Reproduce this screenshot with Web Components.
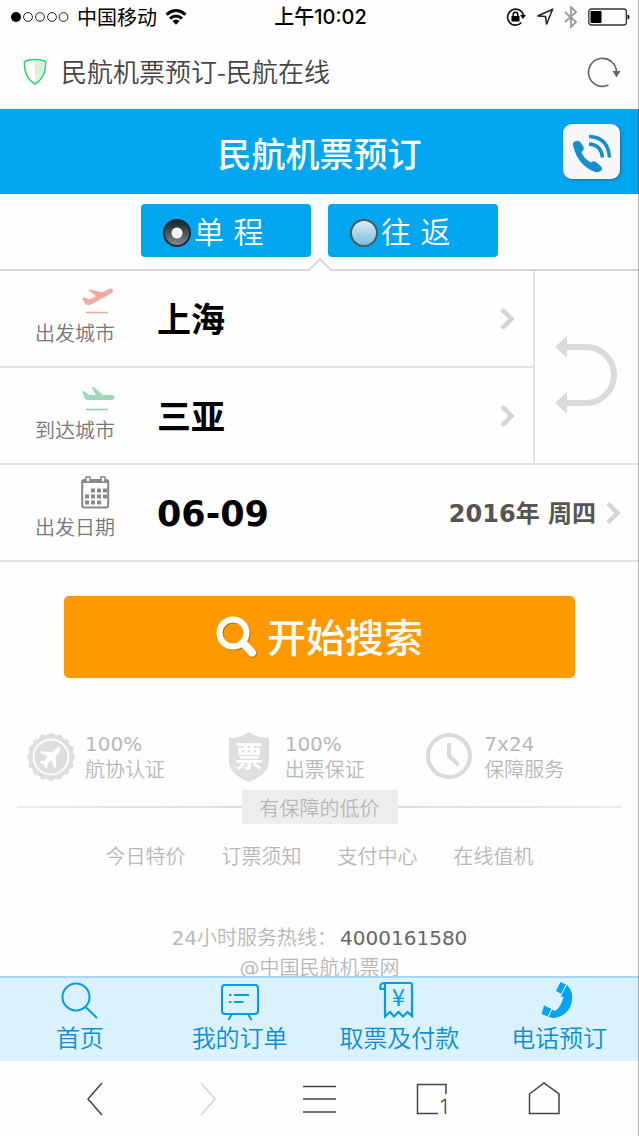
<!DOCTYPE html>
<html lang="zh-CN">
<head>
<meta charset="utf-8">
<meta name="viewport" content="width=device-width, initial-scale=1">
<title>民航机票预订-民航在线</title>
<style>
html, body { margin: 0; height: 100%; }
body { background: #fefefe; font-family: "DejaVu Sans", "Noto Sans CJK SC", sans-serif; font-size: 20px; line-height: 26px; font-weight: 350; color: #000; }
</style>
</head>
<body>
<booking-app></booking-app>

<template id="t-booking-app">
<style>
:host { display: flex; flex-direction: column; height: 100vh; position: relative; }
:host::after { content: ""; position: absolute; top: 0; right: 0; bottom: 0; width: 1px; background: rgba(0,0,0,.3); pointer-events: none; }
main { flex: 1; min-height: 0; overflow-x: hidden; overflow-y: auto; scrollbar-width: none; }
</style>
<status-bar></status-bar>
<browser-bar>民航机票预订-民航在线</browser-bar>
<page-header>民航机票预订</page-header>
<main>
<trip-tabs></trip-tabs>
<search-form></search-form>
<trust-list></trust-list>
<page-footer></page-footer>
</main>
<bottom-nav></bottom-nav>
<browser-tools></browser-tools>
</template>

<template id="t-status-bar">
<style>
:host { display: grid; grid-template-columns: 1fr auto 1fr; align-items: center; height: 36px; padding: 0 9px 2px 11px; box-sizing: border-box; font: 400 20px/34px "Noto Sans CJK SC", sans-serif; }
.side { display: flex; align-items: center; gap: 8px; }
.end { justify-content: flex-end; gap: 10px; }
time { font-family: Inter, "Noto Sans CJK SC", sans-serif; font-weight: 500; }
svg { display: block; }
</style>
<div class="side">
<svg width="58" height="12" viewBox="0 0 58 12"><circle cx="5" cy="6" r="5"/><g fill="none" stroke="#222"><circle cx="17" cy="6" r="4.4"/><circle cx="29" cy="6" r="4.4"/><circle cx="41" cy="6" r="4.4"/><circle cx="52.500" cy="6" r="4.400"/></g></svg>
<span>中国移动</span>
<svg width="22" height="18" viewBox="0 0 22 18"><g fill="none" stroke="#000" stroke-width="3"><path d="M1.500 6.500Q11-1.500 20.500 6.500"/><path d="M5 10.500Q11 5.500 17 10.500"/></g><path d="M7.300 13Q11 10 14.700 13L11 16.800Z"/></svg>
</div>
<time>上午10:02</time>
<div class="side end">
<svg width="20" height="20" viewBox="0 0 20 20"><path d="M15.500 15.500A8 8 0 1 1 17.300 8" fill="none" stroke="#111" stroke-width="1.600"/><path d="M14 8h6l-3 4z"/><path d="M5.500 9h8v5.500h-8z"/><path d="M7.200 9V7.500a2.300 2.300 0 0 1 4.600 0V9" fill="none" stroke="#000" stroke-width="1.500"/></svg>
<svg width="18" height="18" viewBox="0 0 18 18"><path d="M1.500 8L16.500 1.500L10.500 16.500L9.500 8.500Z" fill="none" stroke="#222" stroke-width="1.500"/></svg>
<svg width="14" height="22" viewBox="0 0 14 22"><path d="M1 6L12 16L7 21V1L12 6L1 16" fill="none" stroke="#999" stroke-width="1.800"/></svg>
<svg width="42" height="18" viewBox="0 0 42 18"><rect x=".8" y="1" width="37.500" height="16" rx="2.500" fill="none" stroke="#333" stroke-width="1.300"/><rect x="2.500" y="3" width="11" height="12"/><path d="M39.500 6.500q2 .3 2 2.500t-2 2.500z"/></svg>
</div>
</template>

<template id="t-browser-bar">
<style>
:host { display: flex; align-items: center; height: 73px; padding: 0 18px 2px 23px; box-sizing: border-box; font: 350 26px/36px "Noto Sans CJK SC", sans-serif; color: #444; }
span { flex: 1; margin-left: 14px; padding-bottom: 2px; }
button { border: 0; background: none; padding: 0; }
svg { display: block; }
</style>
<svg width="24" height="28" viewBox="0 0 24 28"><path d="M12 3V25Q21 19 21.500 4.500Q17 3 12 3Z" fill="#d6f3df"/><path d="M12 1.500Q18 1.500 22.500 3.500Q23.500 19 12 26Q.5 19 1.500 3.500Q6 1.500 12 1.500Z" fill="none" stroke="#2fd06d" stroke-width="1.500"/></svg>
<span><slot></slot></span>
<button aria-label="刷新"><svg width="34" height="32" viewBox="0 0 34 32"><path d="M21.500 29A14 14 0 1 1 29.500 16" fill="none" stroke="#666" stroke-width="1.600"/><path d="M25.500 15h8l-4 6.500z" fill="#666"/></svg></button>
</template>

<template id="t-page-header">
<style>
:host { display: grid; grid-template-columns: 1fr auto 1fr; align-items: center; height: 85px; padding: 0 19px; box-sizing: border-box; background: #02a6f0; color: #fff; }
h1 { grid-column: 2; margin: 0; font: 500 34px/48px "Noto Sans CJK SC", sans-serif; padding-top: 2px; }
a { justify-self: end; display: block; width: 57px; height: 55px; border-radius: 9px; background: #f8f8f8; box-shadow: 1px 1px 3px #246a91; }
svg { display: block; }
</style>
<h1><slot></slot></h1>
<a href="tel:4000161580" aria-label="电话"><svg width="57" height="55" viewBox="0 0 57 55"><path d="M10.500 23Q8.500 18 13 17Q16 16 18 19L20.500 23Q21.500 26 18.500 28Q20.500 34.500 28 38.500Q31 36 33.500 38.500L38 42.500Q40.500 45 37.500 47Q35 49 31 47.500Q15 41 10.500 23Z" fill="#168dcc"/><g fill="none" stroke="#168dcc" stroke-width="3.500"><path d="M26 12.500Q45 13 46.500 33.500"/><path d="M26 20Q38 20.500 39.500 33.500"/></g></svg></a>
</template>

<template id="t-trip-tabs">
<style>
:host { display: flex; justify-content: center; gap: 17px; position: relative; padding: 10px 0 13px; border-bottom: 2px solid #d6d6d6; height: 52px; }
label { display: flex; align-items: center; gap: 3px; width: 170px; padding-left: 22px; height: 53px; box-sizing: border-box; border-radius: 4px; background: #02a6f0; color: #fff; font-size: 30px; line-height: 42px; white-space: nowrap; }
span { padding-top: 4px; }
input { appearance: none; margin: 5px 0 0; width: 28px; height: 28px; border-radius: 50%; flex: none; border: 2px solid #4b5961; background: linear-gradient(#dcecf3, #78bfdd); }
input:checked { border-color: #1d2a31; background: radial-gradient(circle, #f4f4f4 0 5px, rgba(0,0,0,0) 6px), linear-gradient(#11242e, #84898b); }
svg { position: absolute; left: calc(50% - 14px); bottom: -2px; }
</style>
<label><input type="radio" name="trip" checked><span>单 程</span></label>
<label><input type="radio" name="trip"><span>往 返</span></label>
<svg width="28" height="15" viewBox="0 0 28 15"><path d="M2 15L14 3L26 15Z" fill="#fefefe"/><path d="M1 14h2L14 3L25 14h2" fill="none" stroke="#d6d6d6" stroke-width="2"/></svg>
</template>

<template id="t-field-row">
<style>
:host { display: block; }
button { display: flex; align-items: center; width: 100%; height: 97px; padding: 0 18px 0 0; border: 0; border-bottom: 2px solid #e2e2e2; background: none; text-align: left; font: inherit; color: inherit; }
.name { display: flex; flex-direction: column; align-items: flex-end; width: 115px; margin-right: 42px; padding-bottom: 10px; line-height: 26px; color: #777; }
.icon { display: block; width: 34px; height: 40px; }
.value { flex: 1; font-weight: 700; font-size: var(--value-size, 34px); line-height: 48px; padding-top: 3px; }
.note { font-weight: 700; font-size: 24px; line-height: 48px; color: #555; margin-right: 10px; padding-top: 3px; white-space: nowrap; }
svg { display: block; }
</style>
<button type="button">
<span class="name"><span class="icon"><slot name="icon"></slot></span><slot name="label"></slot></span>
<span class="value"><slot></slot></span>
<span class="note"><slot name="note"></slot></span>
<svg width="15" height="24" viewBox="0 0 15 24"><path d="M2 2.500L11.500 12L2 21.500" fill="none" stroke="#d4d4d4" stroke-width="4.500"/></svg>
</button>
</template>

<template id="t-search-form">
<style>
:host { display: block; }
.route { display: grid; grid-template-columns: minmax(0, 1fr) 106px; }
.date { --value-size: 35px; }
.swap { border: 0; border-left: 2px solid #e2e2e2; border-bottom: 2px solid #e2e2e2; background: none; padding: 16px 2px 0 0; display: flex; align-items: center; justify-content: center; }
.go { display: flex; align-items: center; justify-content: center; gap: 9px; width: 80%; height: 82px; margin: 34px auto 0; border: 0; border-radius: 5px; background: #ff9900; color: #fff; font: 500 39px/54px "Noto Sans CJK SC", sans-serif; }
.go span { padding-bottom: 4px; }
svg { display: block; }
</style>
<div class="route">
<div>
<field-row><svg slot="icon" width="34" height="36" viewBox="0 0 34 36"><path d="M1 17L4 16.500L8.500 18.500L15 15L7 9L10 8.500L21 11.500L28 8Q31 7 32 8.500Q32.500 11 30 12.500L10 23.500Q6 25.500 4 22.500Z" fill="#f2aaa0"/><path d="M5 31.500H27" stroke="#efa9a0" stroke-width="1.500"/></svg><span slot="label">出发城市</span>上海</field-row>
<field-row><svg slot="icon" width="34" height="36" viewBox="0 0 34 36"><path d="M1 13L3.500 13.500L8 17H15L10.500 9L13.500 9.500L22 17H31Q34 17 33.500 20Q33 22 30 22H7Q4 22 3 19Z" fill="#9ed8b8"/><path d="M5 31.500H27" stroke="#8fd0ad" stroke-width="1.500"/></svg><span slot="label">到达城市</span>三亚</field-row>
</div>
<button class="swap" type="button" aria-label="交换城市"><svg width="62" height="78" viewBox="0 0 62 78"><path d="M11 11H31A28 28 0 0 1 31 67H11" fill="none" stroke="#dadada" stroke-width="6"/><path d="M0 11L12 0V22ZM0 67L12 56V78Z" fill="#dadada"/></svg></button>
</div>
<field-row class="date"><svg slot="icon" width="34" height="36" viewBox="0 0 34 36"><rect x="1.200" y="5" width="26" height="27.500" rx="2" fill="none" stroke="#888" stroke-width="2"/><path d="M1 5h27v3H1z" fill="#888"/><g fill="#fefefe" stroke="#888" stroke-width="1.500"><rect x="5" y="2" width="4" height="5"/><rect x="20" y="2" width="4" height="5"/></g><g stroke="#888" stroke-width="4" stroke-dasharray="4 2"><path d="M10 15.500h16"/><path d="M4 21.500h22"/><path d="M4 27.500h16"/></g></svg><span slot="label">出发日期</span>06-09<span slot="note">2016年 周四</span></field-row>
<button class="go" type="button"><svg width="42" height="46" viewBox="0 0 42 46"><g fill="none" stroke="#8a5a10" stroke-opacity=".6" transform="translate(1 1)"><circle cx="17" cy="19" r="13.500" stroke-width="6"/><path d="M28 30L36 38.500" stroke-width="8" stroke-linecap="round"/></g><g fill="none" stroke="#fff"><circle cx="17" cy="19" r="13.500" stroke-width="6"/><path d="M27 29L36 38.500" stroke-width="8" stroke-linecap="round"/></g></svg><span>开始搜索</span></button>
</template>

<template id="t-trust-item">
<style>
:host { display: flex; align-items: center; gap: 10px; color: #b8b8b8; white-space: nowrap; }
.text { display: flex; flex-direction: column; }
slot[name=top] { font-weight: 400; }
</style>
<slot name="icon"></slot>
<div class="text"><slot name="top"></slot><slot></slot></div>
</template>

<template id="t-trust-list">
<style>
:host { display: grid; grid-template-columns: repeat(3, 1fr); margin: 53px 15px 7px 25px; }
</style>
<trust-item><svg slot="icon" width="50" height="52" viewBox="-26 -26 50 52"><g id="seal" fill="#dedede"><circle r="22"/></g><circle r="17.500" fill="none" stroke="#fefefe" stroke-width="2"/><path d="M9-10Q7-10.500 4.500-8L1-4.500L-10-6L-11.500-4.500L-3.500-.5L-7 4L-10.500 4L-11.500 5.500L-7.500 7.500L-5 11.500L-3.500 10.500V7L.5 3.500L3.500 11.500L5.500 10L4.500-.8L8-4.500Q10-7.500 9-10Z" fill="#fefefe"/></svg><span slot="top">100%</span>航协认证</trust-item>
<trust-item><svg slot="icon" width="50" height="52" viewBox="1 0 50 52"><path d="M25 1Q33 7 45 7V30Q45 43 25 51Q5 43 5 30V7Q17 7 25 1Z" fill="#dedede"/><text x="25" y="36" text-anchor="middle" font-family="Noto Sans CJK SC, sans-serif" font-weight="700" font-size="28" fill="#fefefe">票</text></svg><span slot="top">100%</span>出票保证</trust-item>
<trust-item><svg slot="icon" width="50" height="52" viewBox="0 0 50 52"><g fill="none" stroke="#dadada" stroke-width="4"><circle cx="25" cy="25" r="21"/><path d="M25 12V25L34.500 34"/></g></svg><span slot="top">7x24</span>保障服务</trust-item>
</template>

<template id="t-page-footer">
<style>
:host { display: block; color: #b8b8b8; text-align: center; }
.rule { display: flex; align-items: center; margin: 0 17px; }
.rule::before, .rule::after { content: ""; flex: 1; height: 2px; background: linear-gradient(to right, #ececec, #dedede); }
.rule::after { background: linear-gradient(to left, #ececec, #dedede); }
.rule span { padding: 6px 18px 2px; background: #ededed; }
nav { display: flex; justify-content: center; gap: 36px; margin: 20px 0 53px; }
nav a { color: inherit; text-decoration: none; }
p { margin: 0; line-height: 30px; }
p span, p a { font-weight: 400; }
p a { color: #666; text-decoration: none; margin-left: 3px; }
</style>
<div class="rule"><span>有保障的低价</span></div>
<nav><a href="#sale">今日特价</a><a href="#notice">订票须知</a><a href="#pay">支付中心</a><a href="#checkin">在线值机</a></nav>
<p><span>24</span>小时服务热线：<a href="tel:4000161580">4000161580</a></p>
<p><span>@</span>中国民航机票网</p>
</template>

<template id="t-nav-link">
<style>
:host { display: block; }
a { display: flex; flex-direction: column; align-items: center; gap: 2px; color: #0b8fd6; text-decoration: none; font-size: 24px; line-height: 34px; white-space: nowrap; }
</style>
<a><slot name="icon"></slot><slot></slot></a>
</template>

<template id="t-bottom-nav">
<style>
:host { display: grid; grid-template-columns: repeat(4, 1fr); height: 85px; padding-top: 2px; box-sizing: border-box; border-top: 2px solid #a3d9f6; background: #daf2fe; }
</style>
<nav-link href="#home"><svg slot="icon" width="40" height="40" viewBox="0 0 40 40"><g fill="none" stroke="#079be6" stroke-width="2"><circle cx="16" cy="17" r="13.500"/><path d="M25.500 27L37 38"/></g></svg>首页</nav-link>
<nav-link href="#orders"><svg slot="icon" width="40" height="40" viewBox="0 0 40 40"><g fill="none" stroke="#079be6" stroke-width="2"><rect x="2" y="5" width="36" height="29" rx="3"/><path d="M12 34L8.500 40M28 34L31.500 40M9 15h2.500M14 15h15M9 22h2.500M14 22h9.500"/></g></svg>我的订单</nav-link>
<nav-link href="#tickets"><svg slot="icon" width="40" height="40" viewBox="2 0 40 40"><path d="M8 9H3.500Q2.500 3 7 3H33Q35 3 35 5V36L30.500 32L26 36.500L21.500 32L17 36.500L13 32L8 36.500V3" fill="none" stroke="#079be6" stroke-width="2.200"/><text x="21.500" y="26" text-anchor="middle" font-family="Noto Sans CJK SC, sans-serif" font-weight="400" font-size="24" fill="#079be6">¥</text></svg>取票及付款</nav-link>
<nav-link href="#call"><svg slot="icon" width="40" height="40" viewBox="2 0 40 40"><g fill="#02a3f2"><path d="M30 5Q37 11 34.500 23Q31 36 16.500 38L11.500 37L15 29.500L18 31Q24 27 26.500 17.500L23.500 15.500Z"/><path d="M23.500 2L29 4.500L24.500 14L19 11Z"/><path d="M7 25.500L14.500 29L11 36.500L4.500 34Z"/></g><path d="M29.500 4L24 15.500M15 28L11 37.500" stroke="#daf2fe" stroke-width="1"/></svg>电话预订</nav-link>
</template>

<template id="t-browser-tools">
<style>
:host { display: grid; grid-template-columns: repeat(5, 1fr); height: 75px; padding: 0 39px; box-sizing: border-box; background: #fefefe; }
button { border: 0; background: none; padding: 0; display: flex; align-items: center; justify-content: center; }
svg { display: block; overflow: visible; fill: none; stroke: #444; stroke-width: 1.5; }
text { fill: #444; stroke: none; font: 300 20px Inter, sans-serif; }
</style>
<button aria-label="后退"><svg width="36" height="36" viewBox="0 0 36 36"><path d="M25 2L11 18L25 34"/></svg></button>
<button aria-label="前进"><svg style="stroke:#d2d2d2" width="36" height="36" viewBox="0 0 36 36"><path d="M12 2L26 18L12 34"/></svg></button>
<button aria-label="菜单"><svg width="36" height="36" viewBox="0 0 36 36"><path d="M2 5.500H35M2 18H35M2 31H35"/></svg></button>
<button aria-label="标签页"><svg width="36" height="36" viewBox="0 0 36 36"><path d="M24 32.500H3.500V3.500H32V13"/><text x="26" y="33">1</text></svg></button>
<button aria-label="主页"><svg width="36" height="36" viewBox="0 0 36 36"><path d="M3.500 32.500V13L18 2L33 13V32.500Z"/></svg></button>
</template>

<script>
class Base extends HTMLElement {
  constructor() {
    super();
    this.attachShadow({ mode: "open" });
    this.shadowRoot.append(document.getElementById("t-" + this.localName).content.cloneNode(true));
  }
}

class NavLink extends Base {
  connectedCallback() {
    this.shadowRoot.querySelector("a").href = this.getAttribute("href");
  }
}

class TrustList extends Base {
  // Adds the scalloped rim round the seal.
  connectedCallback() {
    const pts = [];
    for (let i = 0; i < 32; i++) {
      const r = i % 2 ? 22 : 24.5;
      const a = Math.PI * i / 16 - Math.PI / 2;
      pts.push(`${r * Math.cos(a)},${r * Math.sin(a)}`);
    }
    const rim = document.createElementNS("http://www.w3.org/2000/svg", "polygon");
    rim.setAttribute("points", pts.join(" "));
    this.shadowRoot.getElementById("seal").append(rim);
  }
}

class SearchForm extends Base {
  // Exchanges the departure and arrival cities.
  connectedCallback() {
    this.shadowRoot.querySelector(".swap").addEventListener("click", () => {
      const [a, b] = this.shadowRoot.querySelectorAll(".route field-row");
      const from = a.lastChild.data;
      a.lastChild.data = b.lastChild.data;
      b.lastChild.data = from;
    });
  }
}

customElements.define("nav-link", NavLink);
customElements.define("trust-list", TrustList);
customElements.define("search-form", SearchForm);
for (const name of ["status-bar", "browser-bar", "page-header", "trip-tabs", "field-row", "trust-item", "page-footer", "bottom-nav", "browser-tools", "booking-app"]) {
  customElements.define(name, class extends Base {});
}
</script>
</body>
</html>
